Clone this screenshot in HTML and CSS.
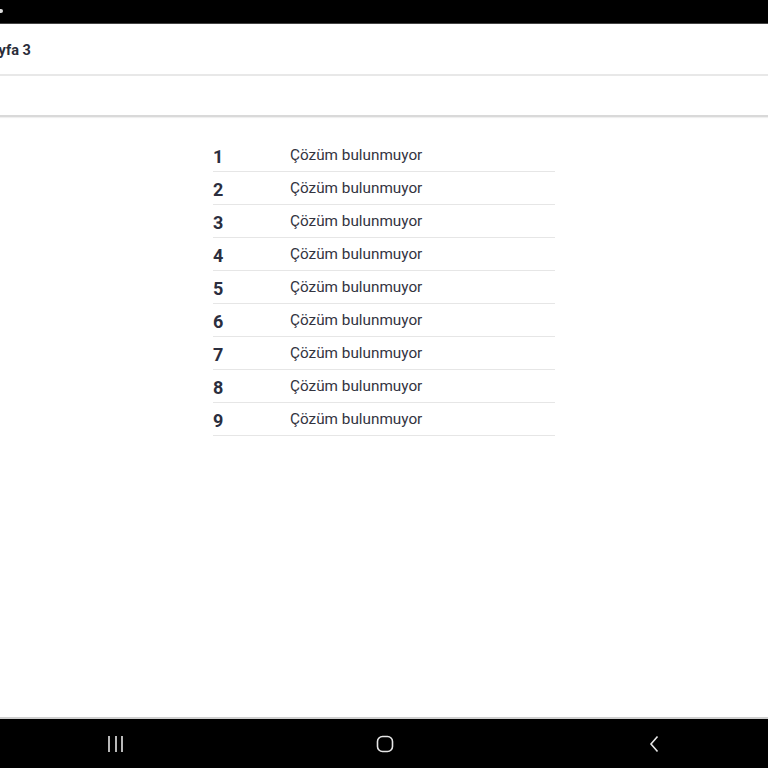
FILE: index.html
```html
<!DOCTYPE html>
<html lang="tr">
<head>
<meta charset="utf-8">
<title>Sayfa 3</title>
<link rel="stylesheet" href="styles.css">
</head>
<body>
<div class="screen">
  <div class="status-bar"><span class="status-dot"></span></div>
  <header class="app-header"><h1 class="title">Sayfa 3</h1></header>
  <div class="toolbar"></div>
  <main class="content">
    <ul class="list">
      <li class="row"><span class="num">1</span><span class="label">Çözüm bulunmuyor</span></li>
      <li class="row"><span class="num">2</span><span class="label">Çözüm bulunmuyor</span></li>
      <li class="row"><span class="num">3</span><span class="label">Çözüm bulunmuyor</span></li>
      <li class="row"><span class="num">4</span><span class="label">Çözüm bulunmuyor</span></li>
      <li class="row"><span class="num">5</span><span class="label">Çözüm bulunmuyor</span></li>
      <li class="row"><span class="num">6</span><span class="label">Çözüm bulunmuyor</span></li>
      <li class="row"><span class="num">7</span><span class="label">Çözüm bulunmuyor</span></li>
      <li class="row"><span class="num">8</span><span class="label">Çözüm bulunmuyor</span></li>
      <li class="row"><span class="num">9</span><span class="label">Çözüm bulunmuyor</span></li>
    </ul>
  </main>
  <nav class="nav-bar">
    <svg class="nav-icon recent" width="20" height="18" viewBox="0 0 20 18"><path d="M3 1v16M10 1v16M16 1v16" stroke="#e6e6e6" stroke-width="1.6" fill="none"/></svg>
    <svg class="nav-icon home" width="18" height="18" viewBox="0 0 18 18"><rect x="1.5" y="1.5" width="15" height="15" rx="5" stroke="#e6e6e6" stroke-width="1.6" fill="none"/></svg>
    <svg class="nav-icon back" width="12" height="18" viewBox="0 0 12 18"><path d="M9.5 1.5 L3 9 L9.5 16.5" stroke="#e6e6e6" stroke-width="1.6" fill="none"/></svg>
  </nav>
</div>
</body>
</html>
```
FILE: styles.css
```css
* { box-sizing: border-box; }
html, body { margin: 0; padding: 0; }
body {
  font-family: Roboto, "Noto Sans", "Liberation Sans", sans-serif;
  background: #ffffff;
}
.screen {
  width: 768px;
  height: 768px;
  display: flex;
  flex-direction: column;
  overflow: hidden;
}
.status-bar {
  height: 24px;
  background: #000;
  border-bottom: 1px solid #444;
  display: flex;
  align-items: center;
}
.status-dot {
  width: 3px;
  height: 4px;
  background: #ddd;
  border-radius: 0 2px 2px 0;
  margin-top: -2px;
}
.app-header {
  height: 52px;
  border-bottom: 2px solid #e8e8e8;
  display: flex;
  align-items: center;
  overflow: hidden;
  padding-top: 2px;
}
.title {
  margin: 0 0 0 -18px;
  font-size: 14.5px;
  font-weight: 700;
  color: #2a2d3a;
}
.toolbar {
  height: 41px;
  border-bottom: 2px solid #d9d9d9;
  box-shadow: 0 1px 1px #efefef;
}
.content {
  flex: 1;
  display: flex;
  justify-content: center;
  padding-top: 22px;
}
.list {
  list-style: none;
  margin: 0;
  padding: 0;
  width: 342px;
}
.row {
  height: 33px;
  display: flex;
  align-items: center;
  border-bottom: 1.5px solid #e6e6e6;
}
.num {
  width: 77px;
  font-size: 18px;
  font-weight: 700;
  color: #2b2e3e;
  padding-top: 3px;
}
.label {
  font-size: 15.3px;
  color: #33343f;
}
.nav-bar {
  height: 51px;
  background: #000;
  border-top: 2px solid #cfcfcf;
  display: flex;
  align-items: center;
}
.recent { margin-left: 106px; }
.home { margin-left: 250px; }
.back { margin-left: 254px; }
```
